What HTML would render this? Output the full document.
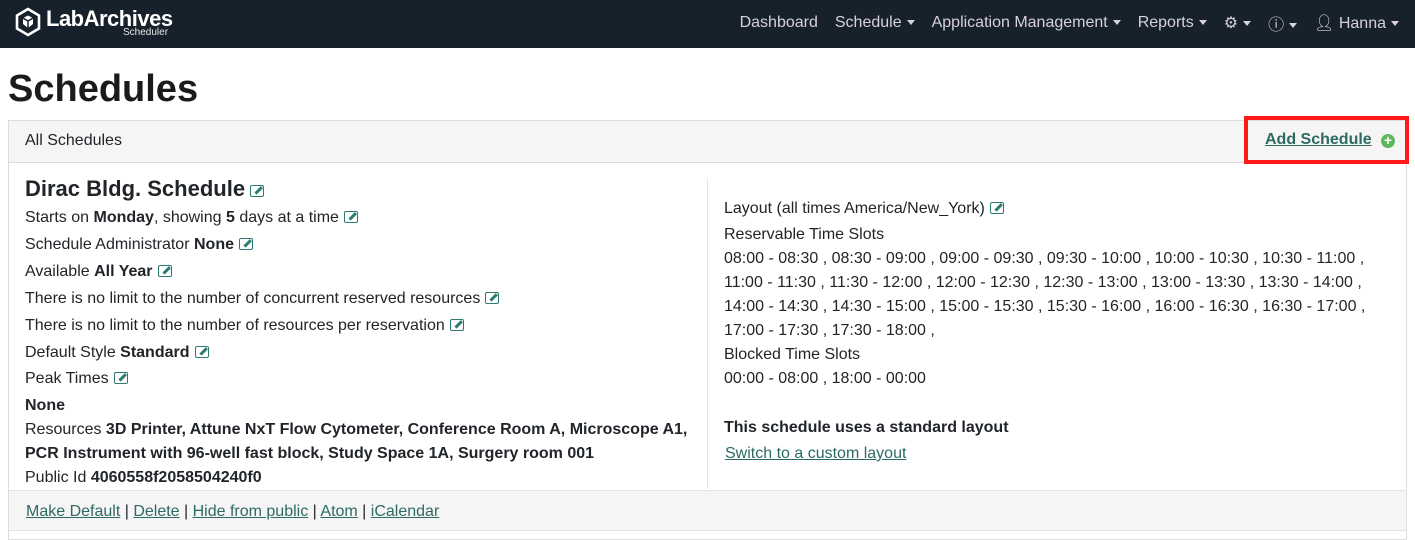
<!DOCTYPE html>
<html><head><meta charset="utf-8"><style>
*{box-sizing:border-box;margin:0;padding:0}
body{width:1415px;height:538px;overflow:hidden;background:#fff;font-family:"Liberation Sans",Arial,sans-serif;color:#212529;font-size:16px}
.nav{height:48px;background:#16212b;position:relative}
.logo{position:absolute;left:14px;top:6px;color:#fff}
.nav .items{position:absolute;right:16px;top:11px;color:#d8d0dc;font-size:16px;display:flex;gap:17px;align-items:center}
.caret{display:inline-block;width:0;height:0;border-left:4px solid transparent;border-right:4px solid transparent;border-top:5px solid #d8d0dc;vertical-align:middle;margin-left:5px}
h1{position:absolute;left:8px;top:68px;font-size:38px;font-weight:bold;color:#1b1b1b}
.card{position:absolute;left:8px;top:120px;width:1399px;height:420px;border:1px solid #dcdcdc}
.hdr{height:42px;background:#f5f5f5;border-bottom:1px solid #dcdcdc;position:relative}
.hdr .t{position:absolute;left:16px;top:11px;font-size:16px}
.add{position:absolute;left:1235px;top:-5px;width:165px;height:48px;border:4px solid #ff1a1a}
.add a{position:absolute;left:17px;top:11px;font-weight:bold;color:#2c6a63;font-size:16px}
a{color:#2c6a63;text-decoration:underline}
.pl{position:absolute;font-size:16px;white-space:nowrap}
.ed{display:inline-block;width:14px;height:12px;border:1.5px solid #2c7a70;border-radius:2px;margin-left:5px;vertical-align:-1px;position:relative}
.ed:after{content:"";position:absolute;left:3px;top:3px;width:9px;height:2.5px;background:#2c7a70;transform:rotate(-45deg)}
.div{position:absolute;left:698px;top:58px;width:1px;height:310px;background:#e3e3e3}
.foot{position:absolute;left:0;top:369px;width:1397px;height:41px;background:#f5f5f5;border-top:1px solid #e3e3e3;border-bottom:1px solid #e3e3e3}
</style></head><body>
<div class="nav">
<div class="logo"><svg width="28" height="30" viewBox="0 0 28 30" style="position:absolute;left:0;top:1px"><path d="M14 2 L25 8.5 V21.5 L14 28 L3 21.5 V8.5Z" fill="none" stroke="#fff" stroke-width="2.6"/><path d="M9 11 L14 8.5 L19 11 V17 L14 21 L9 17Z" fill="#fff"/><path d="M14 14 V21 M9 11 L14 14 L19 11" stroke="#16212b" stroke-width="1.5" fill="none"/></svg>
<span style="position:absolute;left:32px;top:0;font-size:22px;font-weight:bold;letter-spacing:-0.5px">LabArchives</span>
<span style="position:absolute;left:109px;top:21px;font-size:10px;color:#e8e8e8">Scheduler</span></div>
<div class="items"><span>Dashboard</span><span>Schedule<i class="caret"></i></span><span>Application Management<i class="caret"></i></span><span>Reports<i class="caret"></i></span><span>⚙<i class="caret"></i></span><span>ⓘ<i class="caret"></i></span><span>👤︎ Hanna<i class="caret"></i></span></div>
</div>
<h1>Schedules</h1>
<div class="card">
<div class="hdr"><span class="t">All Schedules</span><div class="add"><a>Add Schedule</a><span style="position:absolute;left:133px;top:14px;width:14px;height:14px;border-radius:50%;background:#5cb85c;color:#fff;font-size:14px;line-height:13px;text-align:center;font-weight:bold">+</span></div></div>
<div class="div"></div>
<div class="pl" style="left:16px;top:55px;font-size:22px;font-weight:bold">Dirac Bldg. Schedule<span class="ed"></span></div>
<div class="pl" style="left:16px;top:88px">Starts on <b>Monday</b>, showing <b>5</b> days at a time<span class="ed"></span></div>
<div class="pl" style="left:16px;top:115px">Schedule Administrator <b>None</b><span class="ed"></span></div>
<div class="pl" style="left:16px;top:142px">Available <b>All Year</b><span class="ed"></span></div>
<div class="pl" style="left:16px;top:169px">There is no limit to the number of concurrent reserved resources<span class="ed"></span></div>
<div class="pl" style="left:16px;top:196px">There is no limit to the number of resources per reservation<span class="ed"></span></div>
<div class="pl" style="left:16px;top:223px">Default Style <b>Standard</b><span class="ed"></span></div>
<div class="pl" style="left:16px;top:249px">Peak Times<span class="ed"></span></div>
<div class="pl" style="left:16px;top:276px"><b>None</b></div>
<div class="pl" style="left:16px;top:300px">Resources <b>3D Printer, Attune NxT Flow Cytometer, Conference Room A, Microscope A1,</b></div>
<div class="pl" style="left:16px;top:324px"><b>PCR Instrument with 96-well fast block, Study Space 1A, Surgery room 001</b></div>
<div class="pl" style="left:16px;top:348px">Public Id <b>4060558f2058504240f0</b></div>
<div class="pl" style="left:715px;top:79px">Layout (all times America/New_York)<span class="ed"></span></div>
<div class="pl" style="left:715px;top:105px">Reservable Time Slots</div>
<div class="pl" style="left:715px;top:129px">08:00 - 08:30 , 08:30 - 09:00 , 09:00 - 09:30 , 09:30 - 10:00 , 10:00 - 10:30 , 10:30 - 11:00 ,</div>
<div class="pl" style="left:715px;top:153px">11:00 - 11:30 , 11:30 - 12:00 , 12:00 - 12:30 , 12:30 - 13:00 , 13:00 - 13:30 , 13:30 - 14:00 ,</div>
<div class="pl" style="left:715px;top:177px">14:00 - 14:30 , 14:30 - 15:00 , 15:00 - 15:30 , 15:30 - 16:00 , 16:00 - 16:30 , 16:30 - 17:00 ,</div>
<div class="pl" style="left:715px;top:201px">17:00 - 17:30 , 17:30 - 18:00 ,</div>
<div class="pl" style="left:715px;top:225px">Blocked Time Slots</div>
<div class="pl" style="left:715px;top:249px">00:00 - 08:00 , 18:00 - 00:00</div>
<div class="pl" style="left:715px;top:298px"><b>This schedule uses a standard layout</b></div>
<div class="pl" style="left:716px;top:324px"><a>Switch to a custom layout</a></div>
<div class="foot"><div class="pl" style="left:17px;top:12px"><a>Make Default</a> | <a>Delete</a> | <a>Hide from public</a> | <a>Atom</a> | <a>iCalendar</a></div></div>
</div>
</body></html>
